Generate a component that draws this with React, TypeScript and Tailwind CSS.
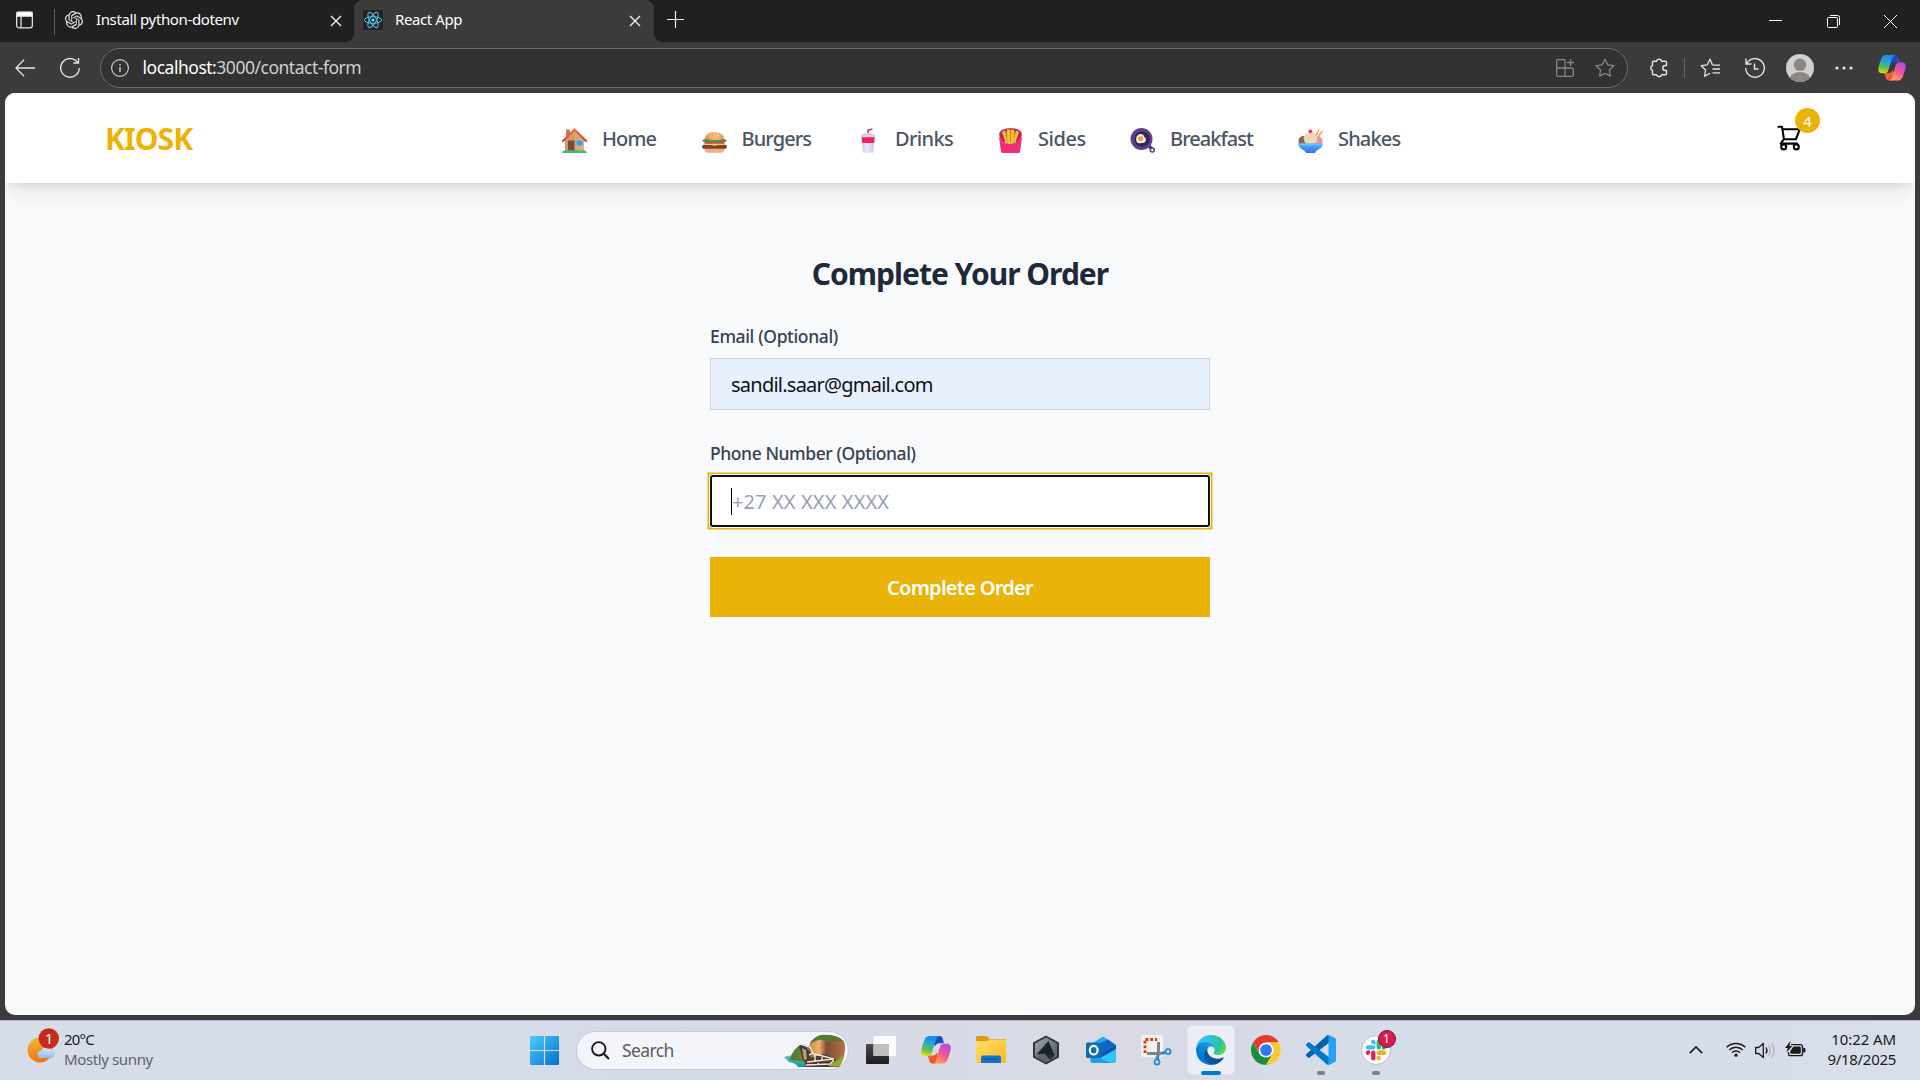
import React from "react";
import { SiOpenai } from "react-icons/si";

/* ---------- browser chrome icons ---------- */

const ReactLogo = () => (
  <svg width="20" height="20" viewBox="0 0 20 20" className="shrink-0">
    <rect width="20" height="20" rx="2" fill="#20232a" />
    <g fill="none" stroke="#58c4dc" strokeWidth="1">
      <ellipse cx="10" cy="10" rx="8.6" ry="3.3" />
      <ellipse cx="10" cy="10" rx="8.6" ry="3.3" transform="rotate(60 10 10)" />
      <ellipse cx="10" cy="10" rx="8.6" ry="3.3" transform="rotate(120 10 10)" />
    </g>
    <circle cx="10" cy="10" r="1.6" fill="#61dafb" />
  </svg>
);

const TabClose = () => (
  <svg width="12" height="12" viewBox="0 0 12 12" fill="none" stroke="#f0f0f0" strokeWidth="1.4" className="mt-[2px] shrink-0">
    <path d="M1 1l10 10M11 1L1 11" />
  </svg>
);

const STAR = "M10 1.2l2.7 5.6 6.1.9-4.4 4.3 1 6.1L10 15.2l-5.4 2.9 1-6.1L1.2 7.7l6.1-.9z";

function Copilot({ id, className }: { id: string; className: string }) {
  return (
    <svg viewBox="0 0 30 28" className={className}>
      <defs>
        <linearGradient id={id + "a"} x1="0.4" y1="0" x2="0.2" y2="1">
          <stop offset="0.1" stopColor="#1b90e8" />
          <stop offset="0.45" stopColor="#2fb0b0" />
          <stop offset="0.7" stopColor="#6cc04a" />
          <stop offset="1" stopColor="#f5d90a" />
        </linearGradient>
        <linearGradient id={id + "b"} x1="0.8" y1="0" x2="0.3" y2="1">
          <stop offset="0" stopColor="#a94be8" />
          <stop offset="0.5" stopColor="#ee5597" />
          <stop offset="1" stopColor="#ffa057" />
        </linearGradient>
        <linearGradient id={id + "c"} x1="0" y1="0" x2="1" y2="0.6">
          <stop offset="0" stopColor="#1e86e5" />
          <stop offset="0.6" stopColor="#1a3fc4" />
          <stop offset="1" stopColor="#2b5fe0" />
        </linearGradient>
        <linearGradient id={id + "d"} x1="0" y1="0" x2="1" y2="1">
          <stop offset="0" stopColor="#f7742f" />
          <stop offset="1" stopColor="#e6412f" />
        </linearGradient>
      </defs>
      <path d="M15 0h3.5c1.800 0 2.700 1 3.200 2.700l1.400 4.600h-5c-2 0-3.200 1-3.800 3L11 6z" fill={`url(#${id}c)`} />
      <path d="M15 27.500h-3.500c-1.800 0-2.700-1-3.200-2.700L6.800 19.500h5c2 0 3.200-1 3.800-3L19 22z" fill={`url(#${id}d)`} />
      <path d="M8.500 0H18c-1.800.4-2.500 1.700-3 3.500l-4 13c-.6 2-1.800 3.200-4.200 3.200H4.300C1.200 19.700-.3 17.500.3 14.300 1 10.400 2.400 6.500 3.800 3.200 4.700 1 6.200 0 8.500 0z" fill={`url(#${id}a)`} />
      <path d="M21.500 27.500H12c1.800-.4 2.500-1.700 3-3.500l4-13c.6-2 1.800-3.200 4.200-3.200h2.500c3.100 0 4.600 2.200 4 5.400-.7 3.900-2.100 7.800-3.500 11.100-.9 2.200-2.400 3.200-4.700 3.200z" fill={`url(#${id}b)`} />
    </svg>
  );
}

/* ---------- menu pictures ---------- */

const emojiClass = "w-[25px] h-[25px] shrink-0";

const House = () => (
  <svg viewBox="0 0 25 25" className={emojiClass}>
    <defs>
      <linearGradient id="hw" x1="0" x2="1"><stop offset="0" stopColor="#d2935f" /><stop offset="1" stopColor="#e5b083" /></linearGradient>
      <linearGradient id="hr" x1="0" x2="1"><stop offset="0" stopColor="#e0402f" /><stop offset=".5" stopColor="#f0714a" /><stop offset="1" stopColor="#dc3f33" /></linearGradient>
    </defs>
    <rect x="4" y="1.500" width="4" height="8" fill="#b98455" />
    <path d="M3 12.500L12.500 2.500 22 12.500V23H3z" fill="url(#hw)" />
    <rect x="6" y="12.500" width="6.500" height="10.500" fill="#7b4b42" />
    <rect x="14.800" y="12.500" width="5.600" height="5" fill="#2fa6f2" />
    <path d="M1 13L12.500 1.700 24 13" fill="none" stroke="url(#hr)" strokeWidth="2.300" strokeLinecap="round" />
    <path d="M0 25q.5-2.700 3-2.700h19q2.500 0 3 2.700z" fill="#3fc07a" />
  </svg>
);

const Burger = () => (
  <svg viewBox="0 0 25 25" className={emojiClass}>
    <defs>
      <linearGradient id="bu" x1="0" x2="1"><stop offset="0" stopColor="#d9944f" /><stop offset=".6" stopColor="#f2bc80" /><stop offset="1" stopColor="#dd9a5c" /></linearGradient>
    </defs>
    <path d="M2.500 12C2.500 7 7 4 12.500 4s10 3 10 8z" fill="url(#bu)" />
    <path d="M2.500 19.500h20v2c0 2-1.500 3.300-3.500 3.300H6c-2 0-3.500-1.300-3.500-3.300z" fill="#eeaf86" />
    <rect x="0" y="16.800" width="25" height="4" rx="2" fill="#7b4136" />
    <path d="M1.500 15h22v1.200c-3 1.800-5-.2-7.500.9-3 1.300-4 .6-6-.2-3-1-6 .8-8.500-.7z" fill="#ffc928" />
    <rect x="2.500" y="13" width="20" height="2.800" rx="1.400" fill="#e13c5f" />
    <path d="M0 12.500c2-1.700 4-1.500 6-1 4 .8 9 .8 13 0 2-.5 4-.7 6 1-1.500 2.300-4 1.800-6 1-4 1.500-9 1.500-13 0-2 .8-4.500 1.300-6-1z" fill="#3f9b45" />
    <g fill="#fff3d6"><circle cx="8" cy="8" r=".7" /><circle cx="12" cy="6" r=".7" /><circle cx="16" cy="7.500" r=".7" /><circle cx="11.500" cy="9" r=".6" /></g>
  </svg>
);

const Drink = () => (
  <svg viewBox="0 0 25 25" className={emojiClass}>
    <defs>
      <linearGradient id="dr" x1="0" x2="1"><stop offset="0" stopColor="#cdbfe4" /><stop offset=".4" stopColor="#eee6fa" /><stop offset="1" stopColor="#d3c3ef" /></linearGradient>
    </defs>
    <path d="M13.200 7V2.200l4.300-1.200" fill="none" stroke="#e8305f" strokeWidth="1.700" />
    <path d="M6 8.500q6.500-5 14 0l-1.700 16.300H8z" fill="url(#dr)" />
    <path d="M6.700 9h13l-.7 6H7.400z" fill="#ee2458" />
    <path d="M5.500 7.700C7 6 9.500 4.800 13 4.800s6 1.200 7.500 2.900v1.500h-15z" fill="#d6d3da" />
  </svg>
);

const Fries = () => (
  <svg viewBox="0 0 25 25" className={emojiClass}>
    <path d="M1.200 6.500C1 3 5 .2 12.500 .2S24 3 23.800 6.500L22 14H3z" fill="#b92a50" />
    <g fill="#f5c531"><path d="M4 4l3-1.500 3 13H8z" /><path d="M21 4l-3-1.500-3 13h2z" /><rect x="9" y="1.500" width="3.200" height="14" /><rect x="13" y="1.700" width="3.200" height="14" /></g>
    <g stroke="#d69b1e" strokeWidth=".7"><path d="M8.500 4l1 11M12.600 2v14M16.600 4l-1 11" /></g>
    <path d="M1 9q2 .2 3 2c2 6.500 15 6.500 17 0Q22 9.200 24 9l-2 14.500q-.2 1.500-1.700 1.500H4.700Q3.200 25 3 23.500z" fill="#f02f79" />
  </svg>
);

const Pan = () => (
  <svg viewBox="0 0 25 25" className={emojiClass}>
    <path d="M18 17l5 5" stroke="#5a3c84" strokeWidth="3.500" />
    <circle cx="11.500" cy="11" r="11" fill="#5d4190" />
    <circle cx="12" cy="11" r="7.800" fill="#35264f" />
    <path d="M7 8c2-2.800 6-2.700 7 .2.300 1 1.700 1.300 2 3 .3 2.400-2.300 4.400-4.700 3.600C9.200 16 6.500 15 6.300 12.500 6.200 11 6 9.500 7 8z" fill="#faf3fb" />
    <circle cx="10.600" cy="10.600" r="2.700" fill="#f7a12d" />
    <circle cx="22.300" cy="22" r="2" fill="#fff" stroke="#5a3c84" strokeWidth="1.500" />
  </svg>
);

const IceCream = () => (
  <svg viewBox="0 0 25 25" className={emojiClass}>
    <defs>
      <linearGradient id="ic" x1="0" x2="0" y1="0" y2="1"><stop offset="0" stopColor="#4bb7fa" /><stop offset="1" stopColor="#3f6cf2" /></linearGradient>
    </defs>
    <path d="M18 8l3-6.500M20.500 8l4-5" stroke="#e49b55" strokeWidth="1.300" />
    <circle cx="5.500" cy="13" r="5" fill="#8d5f55" />
    <circle cx="19.500" cy="13" r="5" fill="#f78c96" />
    <circle cx="12.500" cy="10.500" r="6.800" fill="#f0d6b6" />
    <circle cx="12.500" cy="3.300" r="1.900" fill="#ee3872" />
    <path d="M.3 15.500h24.400c0 3.300-2.700 5.600-6.200 7.200L16.800 25H8.200l-1.700-2.300C3 21.100.3 18.800.3 15.500z" fill="url(#ic)" />
    <path d="M.3 15.500h24.400v1.700H.5z" fill="#62c6fb" />
  </svg>
);

const Cart = () => (
  <svg width="30" height="30" viewBox="0 0 30 30" fill="none" stroke="#000" strokeWidth="2.100" strokeLinejoin="round" strokeLinecap="round">
    <path d="M3.400 3.800h3.600L9 16.300h11.800L24.800 6.300H7.600" />
    <path d="M8.600 16.500L5.800 20.600H22" />
    <circle cx="8.700" cy="23.900" r="2.500" />
    <circle cx="21.300" cy="23.900" r="2.500" />
  </svg>
);

/* ---------- taskbar icons ---------- */

const Weather = () => (
  <svg width="34" height="36" viewBox="0 0 34 36" className="shrink-0">
    <defs>
      <linearGradient id="sun" x1=".3" x2=".6" y1="0" y2="1"><stop offset="0" stopColor="#f4b336" /><stop offset="1" stopColor="#ee6f12" /></linearGradient>
      <linearGradient id="cl" x1="0" x2="0" y1="0" y2="1"><stop offset="0" stopColor="#dcebfc" /><stop offset="1" stopColor="#93b9f2" /></linearGradient>
    </defs>
    <circle cx="13" cy="22" r="12.500" fill="url(#sun)" />
    <path d="M14 30a3.600 3.600 0 0 1 .3-7.200 5.500 5.500 0 0 1 10-1.200 4.300 4.300 0 0 1 .2 8.400z" fill="url(#cl)" />
    <circle cx="21.800" cy="10.500" r="10.200" fill="#c42b1c" />
  </svg>
);

const StartLogo = () => (
  <svg width="29" height="29" viewBox="0 0 29 29">
    <defs>
      <linearGradient id="st" x1="0" y1="0" x2="29" y2="29" gradientUnits="userSpaceOnUse"><stop offset="0" stopColor="#4fcbfb" /><stop offset="1" stopColor="#0470d0" /></linearGradient>
    </defs>
    <path fill="url(#st)" d="M1 0h12.900v13.900H0V1q0-1 1-1zM15.100 0H28q1 0 1 1v12.900H15.100zM0 15.100h13.900V29H1q-1 0-1-1zM15.100 15.100H29V28q0 1-1 1H15.100z" />
  </svg>
);

const Landscape = () => (
  <svg width="62" height="34" viewBox="0 0 62 34" className="shrink-0">
    <defs>
      <linearGradient id="rk" x1="0" x2="1"><stop offset="0" stopColor="#c58040" /><stop offset=".3" stopColor="#f0b070" /><stop offset=".5" stopColor="#7d4b33" /><stop offset="1" stopColor="#b5714a" /></linearGradient>
      <linearGradient id="sea" x1="0" x2="0" y1="0" y2="1"><stop offset="0" stopColor="#57c7c0" /><stop offset="1" stopColor="#1f8fa5" /></linearGradient>
      <linearGradient id="hill" x1="0" x2="1"><stop offset="0" stopColor="#4d7d33" /><stop offset="1" stopColor="#7d8a3c" /></linearGradient>
    </defs>
    <path d="M0 23q7-3 14 0l18 3-3 7H14Q12 29 5 28z" fill="url(#sea)" />
    <path d="M25 12C28 5 35 1 42 1c9 0 19 3 19 11 0 9-2 15-6 21H24z" fill="url(#rk)" />
    <path d="M26 9C30 3 36 0 42 1c8 0 15 3 18 7-6-2-10 0-14-1-2 2-4 1-6-1-5-1-9 1-14 4z" fill="#4f7c34" />
    <path d="M6 26c1-7 6-13 12-16l8 3 5 13-9 2z" fill="url(#hill)" />
    <path d="M15 12l4-2 8 9-1 8-7 0z" fill="#4a3c30" />
    <path d="M18 14l2 12h3l-1-10z" fill="#b79a7c" />
    <path d="M20 26l20-6 12 5-6 8H22z" fill="#4c382c" />
    <path d="M48 29q7-2 10-8 2 5-2 11H44z" fill="#86b02e" />
    <path d="M16 10l10 3 3 6-4 2M27 19l23 6-27 3M22 31l24-1 4-4M31 21v6M38 23v4M34 29v2" fill="none" stroke="#efe6dc" strokeWidth="1.400" />
  </svg>
);

const TaskView = () => (
  <svg width="30" height="28" viewBox="0 0 30 28">
    <defs><linearGradient id="tv" x1="0" x2="0" y1="0" y2="1"><stop offset="0" stopColor="#4a4a4a" /><stop offset="1" stopColor="#1d1d1d" /></linearGradient></defs>
    <rect x="0" y="8" width="23" height="20" rx="1" fill="url(#tv)" />
    <rect x="7.500" y="0" width="22.500" height="20" rx="1" fill="#fff" opacity=".9" />
    <rect x="7.500" y="8" width="15.500" height="12" fill="#bfbfbf" />
  </svg>
);

const Folder = () => (
  <svg width="30" height="27" viewBox="0 0 30 27">
    <defs><linearGradient id="fo" x1="0" x2="1" y1="0" y2="1"><stop offset="0" stopColor="#ffdc6a" /><stop offset="1" stopColor="#f9ba25" /></linearGradient></defs>
    <path d="M0 1.500Q0 0 1.500 0h8.300q1 0 1.700.8L13.500 3H28q2 0 2 2v4H0z" fill="#dc9d0b" />
    <path d="M0 5h11l2.500-1.500H30V26q0 1-1 1H1q-1 0-1-1z" fill="url(#fo)" />
    <path d="M5 27v-5.500Q5 19.500 7 19.500h16q2 0 2 2V27z" fill="#0f73c6" />
    <path d="M8.500 23h13" stroke="#0a4d8d" strokeWidth="1" />
  </svg>
);

const HexApp = () => (
  <svg width="28" height="30" viewBox="0 0 28 30">
    <defs><linearGradient id="hx" x1="0" x2="1" y1="0" y2="1"><stop offset="0" stopColor="#9ba6ad" /><stop offset="1" stopColor="#4b545c" /></linearGradient></defs>
    <path d="M14 .5L27 7.500v15L14 29.500 1 22.500v-15z" fill="#30363c" />
    <path d="M14 2.500L25 8.500v13L14 27.500 3 21.500v-13z" fill="url(#hx)" />
    <path d="M16.500 6L22.500 20.500 4.500 19.500z" fill="#1c2126" />
    <path d="M4.500 19.500l8-1L18 25l-4 2.500L5 22z" fill="#5d666d" />
    <path d="M12.500 18.500l10 2L18 25z" fill="#252b30" />
  </svg>
);

const Outlook = () => (
  <svg width="30" height="28" viewBox="0 0 30 28">
    <path d="M4 9L15.500 1.200q1.500-1 3 0L30 9v3L17 20 4 13z" fill="#28a8ea" />
    <path d="M6 11L22 3.500 29.500 9l-14 10z" fill="#0b66c2" />
    <path d="M12 19L30 9v15.500q0 2.500-2.500 2.500H7q-2.500 0-2.500-2.500z" fill="#35c5f5" />
    <path d="M12 19L30 9v4L14 22z" fill="#0a4fa8" />
    <path d="M14 22l11 5H7q-2.500 0-2.500-2.500V20z" fill="#1f9fe5" />
    <rect x="0" y="6.500" width="15.500" height="15.500" rx="1.500" fill="#0f6cbd" />
    <ellipse cx="7.700" cy="14.200" rx="3.900" ry="4.300" fill="none" stroke="#fff" strokeWidth="2.200" />
  </svg>
);

const Snip = () => (
  <svg width="32" height="32" viewBox="0 0 32 32">
    <rect x="1" y="1" width="22" height="22" rx="2" fill="#f3f3f3" />
    <path d="M5 19V5.500h12" fill="none" stroke="#d83b01" strokeWidth="2.800" strokeDasharray="2.800 1.900" />
    <path d="M18.500 8v12l-2 5M7 19.500h13l5-1" fill="none" stroke="#7c8288" strokeWidth="3" />
    <circle cx="17" cy="28" r="2.500" fill="none" stroke="#1a8ad6" strokeWidth="1.700" />
    <circle cx="28" cy="17.500" r="2.500" fill="none" stroke="#1a8ad6" strokeWidth="1.700" />
    <path d="M18.200 25.500v-4M25.500 18.600l-4 .8" stroke="#1a8ad6" strokeWidth="1.800" />
  </svg>
);

const Edge = () => (
  <svg width="30" height="30" viewBox="0 0 256 256">
    <defs>
      <linearGradient id="e1" x1="63" y1="178" x2="241" y2="178" gradientUnits="userSpaceOnUse"><stop offset="0" stopColor="#0c59a4" /><stop offset="1" stopColor="#114a8b" /></linearGradient>
      <linearGradient id="e2" x1="158" y1="100" x2="46" y2="222" gradientUnits="userSpaceOnUse"><stop offset="0" stopColor="#1b9de2" /><stop offset=".2" stopColor="#1595df" /><stop offset=".7" stopColor="#0680d7" /><stop offset="1" stopColor="#0078d4" /></linearGradient>
      <radialGradient id="e3" cx="26" cy="47" r="203" gradientUnits="userSpaceOnUse" gradientTransform="scale(1.150 1)"><stop offset="0" stopColor="#35c1f1" /><stop offset=".3" stopColor="#34c1ed" /><stop offset=".55" stopColor="#2fc2bf" /><stop offset=".78" stopColor="#2bc3a0" /><stop offset="1" stopColor="#5fd94c" /></radialGradient>
    </defs>
    <path fill="url(#e1)" d="M231 190.500c-3.400 1.800-6.900 3.400-10.500 4.700a101.500 101.500 0 0 1-35.900 6.500c-47.300 0-88.500-32.500-88.500-74.300.1-11.400 6.400-21.900 16.400-27.300-42.800 1.800-53.800 46.400-53.800 72.500 0 73.900 68.100 81.400 82.800 81.400 7.900 0 19.800-2.300 27-4.600l1.300-.4a128.300 128.300 0 0 0 66.600-52.800 4 4 0 0 0-5.400-5.700z" />
    <path fill="url(#e2)" d="M105.700 241.400a79.200 79.200 0 0 1-22.700-21.300 80.700 80.700 0 0 1 29.500-120c3.100-1.500 8.500-4.100 15.600-4a32.400 32.400 0 0 1 25.700 13 31.900 31.900 0 0 1 6.300 18.700c0-.2 24.500-79.600-80-79.600-43.900 0-80 41.700-80 78.200a130.200 130.200 0 0 0 12.100 56 128 128 0 0 0 156.400 67 75.500 75.500 0 0 1-62.800-8z" />
    <path fill="url(#e3)" d="M152.300 148.900c-.8 1-3.300 2.500-3.300 5.700 0 2.600 1.700 5.100 4.700 7.200 14.400 10 41.500 8.700 41.600 8.700a59.600 59.600 0 0 0 30.300-8.300 61.400 61.400 0 0 0 30.400-52.900c.3-22.400-8-37.300-11.300-43.900C223.500 23.900 177.700 0 128 0A128 128 0 0 0 0 126.200c.5-36.500 36.800-66 80-66 3.500 0 23.500.3 42 10.100 16.300 8.600 24.900 19 30.800 29.200 6.200 10.700 7.300 24.100 7.300 29.500 0 5.300-2.700 13.300-7.800 19.900z" />
  </svg>
);

const Chrome = () => (
  <svg width="30" height="30" viewBox="0 0 48 48">
    <circle cx="24" cy="24" r="24" fill="#fff" />
    <path d="M24 12h20.780A24 24 0 0 0 3.210 12L13.600 30z" fill="#e33b2e" />
    <path d="M34.400 30L24 48A24 24 0 0 0 44.780 12H24z" fill="#fcc934" />
    <path d="M13.600 30L3.210 12A24 24 0 0 0 24 48l10.400-18z" fill="#1e8e3e" />
    <circle cx="24" cy="24" r="12" fill="#fff" />
    <circle cx="24" cy="24" r="9.400" fill="#3478f0" />
  </svg>
);

const VsCode = () => (
  <svg width="30" height="30" viewBox="0 0 100 100">
    <path d="M96.500 10.800L75.900.9a6.200 6.200 0 0 0-7.100 1.200L1.300 63.600a4.200 4.200 0 0 0 0 6.200l5.500 5a4.200 4.200 0 0 0 5.300.2L93.400 13.400a4.100 4.100 0 0 1 6.600 3.300v-.3a6.300 6.300 0 0 0-3.500-5.600z" fill="#0065a9" />
    <path d="M96.500 89.200l-20.600 9.900a6.200 6.200 0 0 1-7.100-1.200L1.300 36.400a4.200 4.200 0 0 1 0-6.200l5.500-5a4.200 4.200 0 0 1 5.300-.2l81.300 61.600a4.100 4.100 0 0 0 6.600-3.300v.3a6.300 6.300 0 0 1-3.500 5.600z" fill="#007acc" />
    <path d="M75.900 99.100a6.200 6.200 0 0 1-7.100-1.200c2.300 2.300 6.200.7 6.200-2.600V4.700c0-3.300-3.900-4.900-6.200-2.600A6.200 6.200 0 0 1 75.900.9l20.600 9.900a6.300 6.300 0 0 1 3.500 5.600v67.200a6.300 6.300 0 0 1-3.500 5.600z" fill="#26a0f2" />
  </svg>
);

const SLACK_A = "M25.800 77.600c0 7.100-5.800 12.900-12.900 12.900S0 84.700 0 77.600s5.800-12.900 12.900-12.900h12.900v12.900zm6.500 0c0-7.100 5.800-12.900 12.900-12.900s12.900 5.800 12.900 12.900v32.300c0 7.100-5.800 12.900-12.900 12.900s-12.900-5.800-12.900-12.900V77.600z";
const SLACK_B = "M45.200 25.800c-7.100 0-12.900-5.800-12.900-12.900S38.100 0 45.200 0s12.900 5.800 12.900 12.900v12.900H45.200zm0 6.500c7.100 0 12.900 5.800 12.900 12.900s-5.800 12.900-12.900 12.900H12.900C5.800 58.100 0 52.300 0 45.200s5.800-12.900 12.900-12.900h32.300z";

const Slack = () => (
  <svg width="30" height="30" viewBox="0 0 30 30">
    <circle cx="15" cy="15" r="14.400" fill="#fff" stroke="#b9bcc6" strokeWidth="1" />
    <g transform="translate(4.700 4.700) scale(.1680)">
      <path d={SLACK_A} fill="#e01e5a" />
      <path d={SLACK_B} fill="#36c5f0" />
      <path d={SLACK_A} fill="#2eb67d" transform="rotate(180 61.400 61.400)" />
      <path d={SLACK_B} fill="#ecb22e" transform="rotate(180 61.400 61.400)" />
    </g>
  </svg>
);

/* ---------- sections ---------- */

function TabStrip() {
  return (
    <div className="flex h-[42px] shrink-0 bg-[#202020] text-[15px] leading-5 text-white">
      <div className="flex h-[39px] w-[55px] items-center pl-4">
        <svg width="18" height="18" viewBox="0 0 18 18" fill="none" stroke="#e8e8e8" strokeWidth="1.300">
          <rect x=".7" y=".7" width="16.600" height="16.600" rx="2.500" />
          <path d="M1 1h16v4H1z" fill="#fff" />
          <path d="M5.300 5v12" />
        </svg>
        <span className="ml-[21px] mt-[5px] h-[26px] w-px shrink-0 bg-[#5c5c5c]" />
      </div>
      <div className="flex h-[39px] w-[299px] items-center pl-[10px] pr-[12px]">
        <SiOpenai size={18} color="#e3e3e3" className="shrink-0" />
        <span className="ml-[13px] grow pb-px tracking-[-0.37px]">Install python-dotenv</span>
        <TabClose />
      </div>
      <div className="flex h-[42px] w-[300px] items-start rounded-t-[9px] bg-[#3b3b3b]">
        <span className="-ml-2 mt-[34px] h-2 w-2 shrink-0 bg-[radial-gradient(circle_at_0_0,#202020_7.500px,#3b3b3b_8px)]" />
        <div className="flex h-[39px] grow items-center pl-[9px] pr-[13px]">
          <ReactLogo />
          <span className="ml-[12px] grow pb-px tracking-[-0.4px]">React App</span>
          <TabClose />
        </div>
        <span className="-mr-2 mt-[34px] h-2 w-2 shrink-0 bg-[radial-gradient(circle_at_100%_0,#202020_7.500px,#3b3b3b_8px)]" />
      </div>
      <svg width="17" height="17" viewBox="0 0 17 17" stroke="#f0f0f0" strokeWidth="1.200" className="ml-[13px] mt-[11px]">
        <path d="M8.500 0v17M0 8.500h17" />
      </svg>
      <div className="ml-auto flex pr-px">
        <div className="flex w-[58px] justify-center pt-5"><span className="h-px w-[13px] bg-white" /></div>
        <div className="flex w-[58px] justify-center pt-[15px]">
          <svg width="13" height="13" viewBox="0 0 13 13" fill="none" stroke="#fff">
            <rect x=".5" y="2.500" width="10" height="10" rx="1" />
            <path d="M3 .5h7.500q2 0 2 2V10" />
          </svg>
        </div>
        <div className="flex w-[57px] justify-center pt-[15px]">
          <svg width="13" height="13" viewBox="0 0 13 13" stroke="#fff"><path d="M0 0l13 13M13 0L0 13" /></svg>
        </div>
      </div>
    </div>
  );
}

function Toolbar() {
  return (
    <div className="flex h-[51px] shrink-0 items-center border-t border-[#353535] bg-[#3b3b3b] text-[#e4e4e4]">
      <svg width="20" height="18" viewBox="0 0 20 18" fill="none" stroke="currentColor" strokeWidth="1.300" className="mb-px ml-[15px]">
        <path d="M20 9H1M9 .8L1 9l8 8.200" />
      </svg>
      <svg width="20" height="20" viewBox="0 0 20 20" fill="none" stroke="currentColor" strokeWidth="1.400" className="ml-[25px]">
        <path d="M17.600 4.500A9.300 9.300 0 1 0 19.300 10M18.500 0v5h-5.300" />
      </svg>
      <div className="ml-5 flex h-10 w-[1528px] items-center rounded-full border border-[#6c6c6c] bg-[#323232] pl-[10px] pr-3">
        <svg width="18" height="18" viewBox="0 0 18 18" fill="none" stroke="#c9c9c9" strokeWidth="1.200">
          <circle cx="9" cy="9" r="8.400" />
          <path d="M9 8v5M9 5v1.500" strokeWidth="1.500" />
        </svg>
        <span className="ml-[13.5px] pb-[2px] text-[17.5px] leading-6 tracking-[-0.48px] text-[#cfcfcf]">
          <span className="text-white">localhost:</span>3000/contact-form
        </span>
        <svg width="18" height="18" viewBox="0 0 18 18" fill="none" stroke="#868686" strokeWidth="1.300" className="ml-auto">
          <path d="M9 9H.7V2q0-1.300 1.300-1.300h5.700Q9 .7 9 2zM.7 9v7q0 1.300 1.300 1.300h7V9zM9 9v8.300h7q1.300 0 1.300-1.300v-5.700Q17.300 9 16 9zM14.500 0v7M11 3.500h7" />
        </svg>
        <svg width="20" height="20" viewBox="0 0 20 20" fill="none" stroke="#868686" strokeWidth="1.300" strokeLinejoin="round" className="ml-[21px]">
          <path d={STAR} />
        </svg>
      </div>
      <svg width="20" height="20" viewBox="0 0 20 20" fill="none" stroke="currentColor" strokeWidth="1.400" className="ml-[21px]">
        <path d="M4.500 3.200h3a2.700 2.700 0 0 1 5.200 0h3.800q1 0 1 1v3.300h-1.200a2.500 2.500 0 0 0 0 5h1.200v3.300q0 1-1 1h-3.800a2.700 2.700 0 0 1-5.200 0h-3q-1 0-1-1v-3.300a2.700 2.700 0 0 1 0-5V4.200q0-1 1-1z" strokeLinejoin="round" />
      </svg>
      <span className="ml-[15px] h-5 w-px bg-[#646464]" />
      <svg width="20" height="20" viewBox="0 0 20 20" fill="none" stroke="currentColor" strokeWidth="1.300" strokeLinejoin="round" className="ml-[15px]">
        <path d="M12.500 7L10 1.200 7.300 6.800l-6.100.9 4.400 4.300-1 6.100L10 15.200M12.500 7.200H20M12.500 11H20M12.500 14.800H20" />
      </svg>
      <svg width="20" height="20" viewBox="0 0 20 20" fill="none" stroke="currentColor" strokeWidth="1.400" className="ml-[25px]">
        <path d="M1.800 5.500A9.300 9.300 0 1 1 .7 10M1 .5V6h5.500M9.500 5.500V11h4" />
      </svg>
      <svg width="28" height="28" viewBox="0 0 28 28" className="ml-[21px]">
        <defs><clipPath id="av"><circle cx="14" cy="14" r="14" /></clipPath></defs>
        <g clipPath="url(#av)">
          <rect width="28" height="28" fill="#d2d0ce" />
          <circle cx="14" cy="10.800" r="6.200" fill="#8a8785" />
          <ellipse cx="14" cy="25.500" rx="10.500" ry="7.500" fill="#8a8785" />
        </g>
      </svg>
      <svg width="18" height="4" viewBox="0 0 18 4" fill="currentColor" className="ml-[21px]">
        <circle cx="2" cy="2" r="1.600" /><circle cx="9" cy="2" r="1.600" /><circle cx="16" cy="2" r="1.600" />
      </svg>
      <Copilot id="ct" className="ml-[25px] h-[26px] w-7" />
    </div>
  );
}

const links = [
  { label: "Home", icon: House, box: "w-[139.500px]", track: "tracking-[-0.85px]" },
  { label: "Burgers", icon: Burger, box: "w-[153.500px]", track: "tracking-[-0.9px]" },
  { label: "Drinks", icon: Drink, box: "w-[143px]", track: "tracking-[-0.64px]" },
  { label: "Sides", icon: Fries, box: "w-[132px]", track: "tracking-[-0.45px]" },
  { label: "Breakfast", icon: Pan, box: "w-[168px]", track: "tracking-[-0.93px]" },
  { label: "Shakes", icon: IceCream, box: "w-[110px]", track: "tracking-[-0.85px]" },
];

function Page() {
  return (
    <div className="mx-[5px] flex h-[922px] shrink-0 flex-col overflow-hidden rounded-[10px] bg-[#f9fafc]">
      <header className="flex h-[90px] shrink-0 items-center bg-white pl-[100px] pr-[110px] shadow-[0_12.5px_18.75px_-3.75px_rgb(0_0_0/0.1),0_5px_7.5px_-5px_rgb(0_0_0/0.1)]">
        <a className="w-[457px] pt-[2px] text-[30px] font-bold leading-10 tracking-[-0.9px] text-[#eab308]">KIOSK</a>
        <nav className="flex text-[20px] font-medium leading-[30px] text-gray-600">
          {links.map(({ label, icon: Icon, box, track }) => (
            <a key={label} className={`flex items-center gap-[15px] ${box} ${track}`}>
              <span className="pt-[4px]"><Icon /></span>
              <span className="pt-[2px]">{label}</span>
            </a>
          ))}
        </nav>
        <div className="relative ml-auto">
          <Cart />
          <span className="absolute -right-[15px] -top-[15px] flex h-[25px] w-[25px] items-center justify-center rounded-full bg-[#eab308] pt-px text-[15px] leading-none text-white">4</span>
        </div>
      </header>
      <main className="mx-auto flex w-[500px] flex-col pt-[71px]">
        <h2 className="text-center text-[30px] font-bold leading-[40px] tracking-[-1px] text-gray-800">Complete Your Order</h2>
        <label className="mt-[30px] text-[17.5px] font-medium leading-[25px] tracking-[-0.36px] text-gray-700">Email (Optional)</label>
        <div className="mt-[9px] flex h-[52px] items-center border border-[#cbd5e1] bg-[#e8f0fe] px-5 pt-[2px] text-[20px] tracking-[-0.76px] text-[#111]">sandil.saar@gmail.com</div>
        <label className="mt-[31px] text-[17.5px] font-medium leading-[25px] tracking-[-0.42px] text-gray-700">Phone Number (Optional)</label>
        <div className="mt-[9px] bg-[#eab308] shadow-[0_0_0_2px_#eab308,0_0_0_3px_#f0d488]">
          <div className="flex h-[52px] items-center rounded-[3px] border-2 border-[#101010] bg-white px-[19px] text-[20px] tracking-[0.12px] text-gray-400 shadow-[0_0_0_1px_#fff]">
            <span className="h-[27px] w-px bg-black" />
            <span className="pt-[2px]">+27 XX XXX XXXX</span>
          </div>
        </div>
        <button className="mt-[30px] h-[60px] bg-[#eab308] pt-[2px] text-[20px] font-semibold tracking-[-0.72px] text-white">Complete Order</button>
      </main>
    </div>
  );
}

function Taskbar() {
  return (
    <footer className="flex h-[60px] shrink-0 items-center border-t border-[#b4b4ba] bg-[linear-gradient(90deg,#d6dde9,#d5dbe9_30%,#d9dae4_58%,#d5dcea_75%,#d8deea)] text-[15px] leading-5 text-[#1b1b1b]">
      <div className="relative ml-[27px] w-[37px] pb-[10px]">
        <Weather />
        <span className="absolute left-[17px] top-px w-[10px] text-center text-[14px] leading-5 text-white">1</span>
      </div>
      <div className="w-[456px] pb-[3px]">
        <p className="tracking-[-0.8px]">20°C</p>
        <p className="tracking-[-0.38px] text-[#5f6369]">Mostly sunny</p>
      </div>
      <div className="ml-[10px]"><StartLogo /></div>
      <div className="ml-[17px] flex h-[39px] w-[273px] items-center rounded-full border border-[#c3c9da] bg-[#f3f5fa] pl-[14px] pr-[2px]">
        <svg width="19" height="19" viewBox="0 0 19 19" fill="none" stroke="#1b1b1b" strokeWidth="1.900">
          <circle cx="7.800" cy="7.800" r="6.700" /><path d="M12.700 12.700l5.300 5.300" strokeWidth="2.200" />
        </svg>
        <span className="ml-[12px] grow pb-px text-[17.5px] leading-6 tracking-[-0.6px] text-[#5c5c5c]">Search</span>
        <Landscape />
      </div>
      <div className="ml-[4px] flex h-[50px]">
        {[
          { k: "view", el: <TaskView /> },
          { k: "copilot", el: <Copilot id="cb" className="h-7 w-[30px]" /> },
          { k: "folder", el: <Folder /> },
          { k: "hex", el: <HexApp /> },
          { k: "outlook", el: <Outlook /> },
          { k: "snip", el: <Snip /> },
          { k: "edge", el: <Edge />, active: true },
          { k: "chrome", el: <Chrome /> },
          { k: "code", el: <VsCode />, open: true },
          { k: "slack", el: <Slack />, open: true, badge: true },
        ].map(({ k, el, active, open, badge }) => (
          <div key={k} className="flex w-[55px] justify-center">
            <div className={active ? "relative -mt-px flex h-[50px] w-12 flex-col items-center justify-center rounded-[5px] border border-[#dfe3ee] bg-[#ebeef6]" : "relative -mt-px flex h-[50px] w-12 flex-col items-center justify-center"}>
              {el}
              {active && <span className="absolute -bottom-px h-1 w-5 rounded-full bg-[#0078d4]" />}
              {open && <span className="absolute bottom-0 h-1 w-2 rounded-full bg-[#7d8087]" />}
              {badge && <span className="absolute left-[26px] top-[5px] flex h-[18px] w-[18px] items-center justify-center rounded-full border border-[#6d1230] bg-[#d81b51] text-[12px] leading-none text-white">1</span>}
            </div>
          </div>
        ))}
      </div>
      <div className="ml-auto flex items-center pr-6">
        <svg width="14" height="8" viewBox="0 0 14 8" fill="none" stroke="#1b1b1b" strokeWidth="1.700" className="mb-[2px]"><path d="M.8 7.200L7 1l6.200 6.200" /></svg>
        <svg width="20" height="16" viewBox="0 0 20 16" fill="none" stroke="#1b1b1b" strokeWidth="1.500" className="mb-[3px] ml-[23px]">
          <path d="M.6 6.300a13.300 13.300 0 0 1 18.800 0M3.300 9a9.500 9.500 0 0 1 13.400 0M6 11.700a5.700 5.700 0 0 1 8 0" />
          <circle cx="10" cy="14.200" r="1.600" fill="#1b1b1b" stroke="none" />
        </svg>
        <svg width="21" height="17" viewBox="0 0 21 17" fill="none" stroke="#1b1b1b" strokeWidth="1.300" className="mb-px ml-[9px]">
          <path d="M.7 5.500h3L8.300 1.500v14L3.700 11.500h-3z" strokeLinejoin="round" />
          <path d="M11 5.500q2 3 0 6" />
          <path d="M13.500 3.500q3.500 5 0 10M16.500 1.300q5 7.200 0 14.400" stroke="#aeb2bc" />
        </svg>
        <svg width="21" height="17" viewBox="0 0 21 17" className="mb-[3px] ml-[9px]">
          <path d="M6 3.700h9.500q2 0 2 2v7q0 2-2 2h-10q-2 0-2-2V11" fill="none" stroke="#1b1b1b" strokeWidth="1.300" />
          <path d="M8.500 5.500h6.300q1 0 1 1v5.300q0 1-1 1H6.300q-1 0-1-1V10z" fill="#1b1b1b" />
          <path d="M5.500 0L0 7h2.800L1.500 11.500 7.300 5H4.500z" fill="#1b1b1b" />
          <path d="M18.200 7h1.300q1 0 1 1v2.500q0 1-1 1h-1.300z" fill="#1b1b1b" />
        </svg>
        <div className="ml-[18px] w-[72px] pb-[3px] text-right">
          <p className="tracking-[-0.1px]">10:22 AM</p>
          <p className="tracking-[-0.3px]">9/18/2025</p>
        </div>
      </div>
    </footer>
  );
}

export default function App() {
  return (
    <div className="flex h-[1080px] w-[1920px] flex-col overflow-hidden bg-[#3b3b3b] font-['Noto_Sans','Open_Sans',sans-serif]">
      <TabStrip />
      <Toolbar />
      <Page />
      <div className="h-[5px] shrink-0" />
      <Taskbar />
    </div>
  );
}
